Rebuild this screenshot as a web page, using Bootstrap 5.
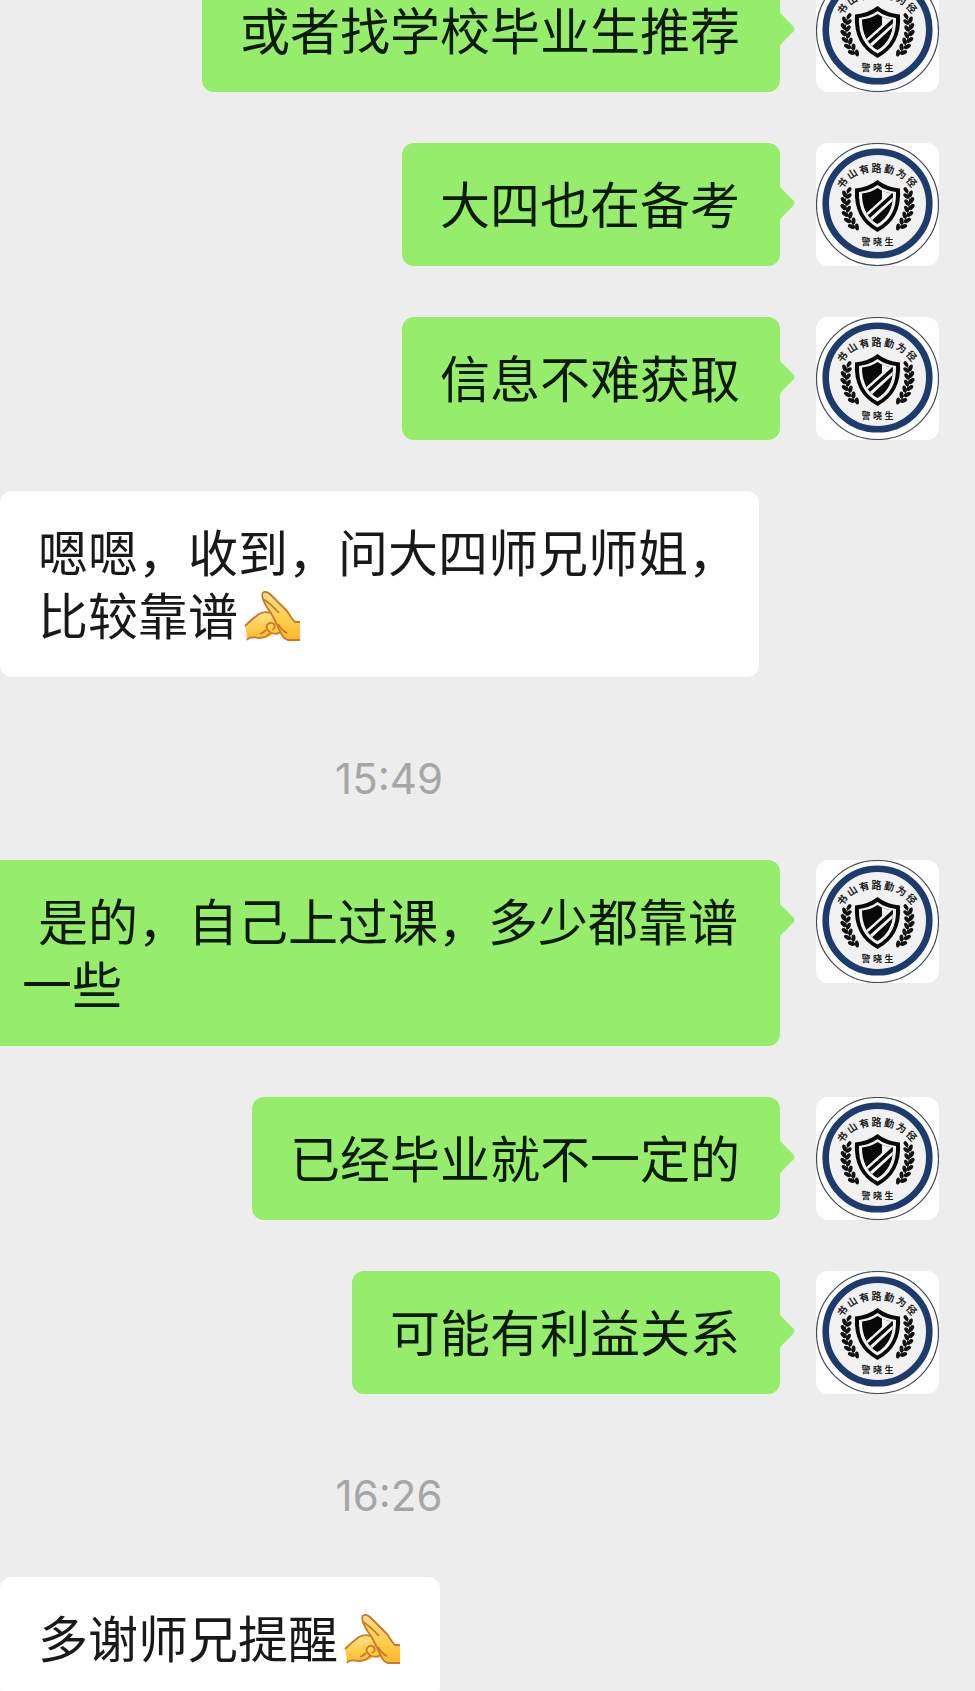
<!DOCTYPE html>
<html lang="zh-CN">
<head>
<meta charset="utf-8">
<meta name="viewport" content="width=device-width, initial-scale=1">
<title>聊天记录</title>
<link href="https://cdn.jsdelivr.net/npm/bootstrap@5.3.0/dist/css/bootstrap.min.css" rel="stylesheet">
<style>
  body { background: #ededed; font-family: "Noto Sans CJK SC", sans-serif; }
  .chat-window { height: 100vh; }
  /* the list is scrolled part of the way through its first message */
  .chat-list { margin-top: -31px; gap: 51px; }
  .msg-out { padding-right: 36px; gap: 36px; }
  .bubble {
    position: relative;
    padding: 28px 40px 32px 38px;
    border-radius: 12px;
    font-size: 50px;
    line-height: 63px;
    white-space: nowrap;
    color: #191919;
    background: #fff;
  }
  .msg-out .bubble { background: #95ed6b; color: #0e1a08; }
  .msg-out .bubble::after {
    content: "";
    position: absolute;
    left: 100%;
    top: 42px;
    width: 16px;
    height: 36px;
    background: inherit;
    clip-path: path("M0 0Q0 3 3 5L13 15Q16 18 13 21L3 31Q0 33 0 36Z");
  }
  .bubble.wide-in { padding-right: 21px; }
  .bubble.wide-out { padding-left: 22px; text-indent: 16px; border-top-left-radius: 0; border-bottom-left-radius: 0; }
  .avatar { width: 123px; height: 123px; border-radius: 12px; }
  .emoji { width: 56px; height: 50px; margin-left: 6px; vertical-align: -6px; }
  .time-row { padding: 21px 197px 0 0; font: 42px/60px Inter, sans-serif; color: #a6a6a6; }
</style>
</head>
<body>
<svg class="position-absolute" width="0" height="0" aria-hidden="true">
  <defs>
    <linearGradient id="skin" x1="0" y1="0" x2="0" y2="1">
      <stop offset="0" stop-color="#ffe08a"/><stop offset=".55" stop-color="#ffcf4f"/><stop offset="1" stop-color="#fdb52c"/>
    </linearGradient>
    <clipPath id="shieldClip"><path d="M61.500 45Q68 49.500 77 50.500Q77 72 61.500 81Q46 72 46 50.500Q55 49.500 61.500 45Z"/></clipPath>
    <g id="branch">
      <path d="M32 47Q24 67 41 87" fill="none" stroke="#111" stroke-width="1"/>
      <g fill="#111">
        <ellipse cx="33" cy="47" rx="1.900" ry="3.200" transform="rotate(35 33 47)"/>
        <ellipse cx="28.500" cy="51" rx="2" ry="3.600" transform="rotate(-20 28.500 51)"/>
        <ellipse cx="32.800" cy="53" rx="1.900" ry="3.400" transform="rotate(48 32.800 53)"/>
        <ellipse cx="27.500" cy="57.500" rx="2.100" ry="3.700" transform="rotate(-32 27.500 57.500)"/>
        <ellipse cx="32" cy="59.500" rx="2" ry="3.500" transform="rotate(38 32 59.500)"/>
        <ellipse cx="27.500" cy="64" rx="2.100" ry="3.800" transform="rotate(-42 27.500 64)"/>
        <ellipse cx="32.500" cy="66" rx="2" ry="3.500" transform="rotate(25 32.500 66)"/>
        <ellipse cx="29" cy="71" rx="2.100" ry="3.800" transform="rotate(-50 29 71)"/>
        <ellipse cx="34.500" cy="72" rx="2" ry="3.500" transform="rotate(12 34.500 72)"/>
        <ellipse cx="31.500" cy="77.500" rx="2.100" ry="3.800" transform="rotate(-60 31.500 77.500)"/>
        <ellipse cx="37.500" cy="78" rx="2" ry="3.500" transform="rotate(2 37.500 78)"/>
        <ellipse cx="35.500" cy="83.500" rx="2" ry="3.800" transform="rotate(-70 35.500 83.500)"/>
        <ellipse cx="41" cy="84" rx="1.900" ry="3.500" transform="rotate(-8 41 84)"/>
      </g>
    </g>
  </defs>
  <symbol id="crest" viewBox="0 0 123 123">
    <rect width="123" height="123" fill="#fefefe"/>
    <circle cx="61.500" cy="61.500" r="61" fill="#fff" stroke="#444b55" stroke-width="1.200"/>
    <circle cx="61.500" cy="60.500" r="51.800" fill="#f1f1f2" stroke="#1e3b6d" stroke-width="6.600"/>
    <path d="M61.500 37Q70 44 84 45.500Q86 76 61.500 89Q37 76 39 45.500Q53 44 61.500 37Z" fill="#080808"/>
    <path d="M61.500 42Q69 47.500 80 49Q81 74 61.500 84.500Q42 74 43 49Q54 47.500 61.500 42Z" fill="#f1f1f2"/>
    <g clip-path="url(#shieldClip)">
      <rect x="44" y="43" width="36" height="40" fill="#080808"/>
      <path d="M66 42H82V53L51 82L46 74L66 56Z" fill="#f1f1f2"/>
      <path d="M49 77L79 50M55 82L80 58" stroke="#080808" stroke-width="3.600"/>
      <path d="M61 84L82 64V84Z" fill="#080808"/>
    </g>
    <use href="#branch"/>
    <use href="#branch" transform="matrix(-1 0 0 1 123 0)"/>
    <g font-size="10" font-weight="700" text-anchor="middle" fill="#222">
      <text transform="translate(27 40.500) rotate(-52)" y="3">书</text>
      <text transform="translate(36.500 31.500) rotate(-34)" y="3">山</text>
      <text transform="translate(48.500 27) rotate(-16)" y="3">有</text>
      <text transform="translate(60.500 25.500)" y="3">路</text>
      <text transform="translate(73 27) rotate(14)" y="3">勤</text>
      <text transform="translate(85 31.500) rotate(32)" y="3">为</text>
      <text transform="translate(95 39.500) rotate(50)" y="3">径</text>
      <text x="50" y="101.500" font-size="9">警</text>
      <text x="61.500" y="101.500" font-size="9">晓</text>
      <text x="73" y="101.500" font-size="9">生</text>
    </g>
  </symbol>
  <symbol id="salute" viewBox="0 0 56 50">
    <path d="M1 35Q8 28 15 23Q21 20 27 22L38 38Q36 43 29 43Q24 48 15 47Q6 45 3 49Q3 42 1 35Z" fill="url(#skin)"/>
    <path d="M20 1Q23 0 27 4L43 20Q48 28 51 31L56 31V49H44Q39 48 36 42L26 22Q18 12 18 5Q18 2 20 1Z" fill="url(#skin)"/>
    <g fill="none" stroke="#c8792a" stroke-width="1.800" stroke-linejoin="round">
      <path d="M1 35Q8 28 15 23Q21 20 26 22"/>
      <path d="M3 49Q5 45 15 47Q22 47 26 42M16 43Q19 42 22 39"/>
      <path d="M36 41Q34 44 27 42Q21 38 23 34Q26 30 30 33Q32 37 28 39"/>
      <path d="M56 31H51Q48 28 43 20L27 4Q23 0 20 1Q17 2 19 8Q21 14 27 22Q31 29 36 40Q39 48 44 49H56"/>
      <path d="M19 8Q26 12 35 22M34 33Q38 40 43 42"/>
    </g>
  </symbol>
</svg>

<main class="chat-window overflow-hidden">
  <div class="chat-list d-flex flex-column">
    <div class="msg-out d-flex justify-content-end align-items-start">
      <div class="bubble">或者找学校毕业生推荐</div>
      <svg class="avatar flex-shrink-0" role="img" aria-label="头像"><use href="#crest"/></svg>
    </div>
    <div class="msg-out d-flex justify-content-end align-items-start">
      <div class="bubble">大四也在备考</div>
      <svg class="avatar flex-shrink-0" role="img" aria-label="头像"><use href="#crest"/></svg>
    </div>
    <div class="msg-out d-flex justify-content-end align-items-start">
      <div class="bubble">信息不难获取</div>
      <svg class="avatar flex-shrink-0" role="img" aria-label="头像"><use href="#crest"/></svg>
    </div>
    <div class="d-flex">
      <div class="bubble wide-in">嗯嗯，收到，问大四师兄师姐，<br>比较靠谱<svg class="emoji" role="img" aria-label="抱拳"><use href="#salute"/></svg></div>
    </div>
    <div class="time-row text-center">15:49</div>
    <div class="msg-out d-flex align-items-start">
      <div class="bubble wide-out flex-grow-1">是的，自己上过课，多少都靠谱<br>一些</div>
      <svg class="avatar flex-shrink-0" role="img" aria-label="头像"><use href="#crest"/></svg>
    </div>
    <div class="msg-out d-flex justify-content-end align-items-start">
      <div class="bubble">已经毕业就不一定的</div>
      <svg class="avatar flex-shrink-0" role="img" aria-label="头像"><use href="#crest"/></svg>
    </div>
    <div class="msg-out d-flex justify-content-end align-items-start">
      <div class="bubble">可能有利益关系</div>
      <svg class="avatar flex-shrink-0" role="img" aria-label="头像"><use href="#crest"/></svg>
    </div>
    <div class="time-row text-center">16:26</div>
    <div class="d-flex">
      <div class="bubble">多谢师兄提醒<svg class="emoji" role="img" aria-label="抱拳"><use href="#salute"/></svg></div>
    </div>
  </div>
</main>
<script src="https://cdn.jsdelivr.net/npm/bootstrap@5.3.0/dist/js/bootstrap.bundle.min.js"></script>
</body>
</html>
